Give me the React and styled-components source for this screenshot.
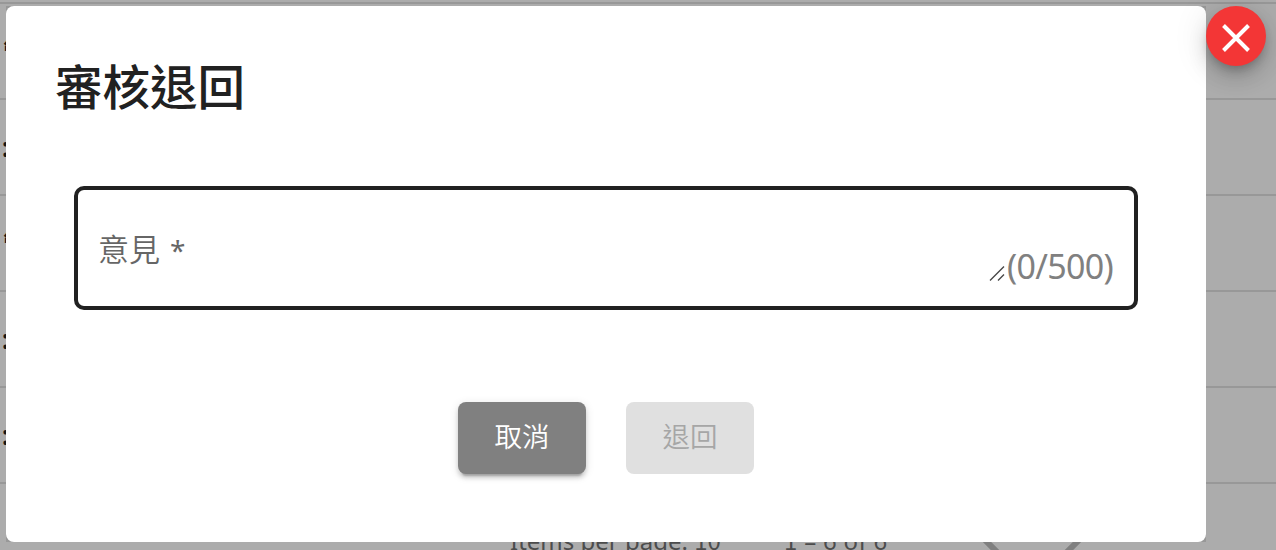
import React from "react";
import styled, { createGlobalStyle } from "styled-components";

const Global = createGlobalStyle`
  * { box-sizing: border-box; }
  body { margin: 0; overflow: hidden; font-family: "Noto Sans", "Noto Sans CJK TC", sans-serif; }
`;

const Page = styled.div`
  position: relative;
  width: 1276px;
  height: 550px;
  overflow: hidden;
  background: #acacac;
  padding-top: 2px;
`;

const Row = styled.div`
  height: 96px;
  border-top: 2px solid #989898;
  display: flex;
  align-items: center;
  color: #161616;
  font-size: 26px;
  line-height: 30px;
  font-weight: 700;
`;

const Cell = styled.span`
  padding-left: ${(p) => p.$indent}px;
`;

const Paginator = styled.div`
  border-top: 2px solid #989898;
  height: 120px;
  padding: 41px 0 0 510px;
  display: flex;
  align-items: flex-start;
  color: #4c4c4c;
  font-size: 24px;
  line-height: 32px;
  white-space: nowrap;
`;

const Digits = styled.span`
  font-family: "Noto Sans CJK TC", sans-serif;
  line-height: 1;
`;

const PageSize = styled.span`
  width: 274px;
`;

const Range = styled.span`
  width: 189px;
  letter-spacing: 0.3px;
`;

const Chevron = styled.svg`
  display: block;
`;

const Overlay = styled.div`
  position: absolute;
  inset: 0;
  padding: 6px;
  display: flex;
  align-items: flex-start;
`;

const Shell = styled.div`
  width: 1200px;
  height: 536px;
  background: #989898;
`;

const Dialog = styled.section`
  height: 100%;
  border-radius: 8px;
  background: #fff;
  padding: 44px 68px 0;
`;

const Title = styled.h2`
  margin: 0 0 0 -19px;
  height: 136px;
  font-family: "Noto Sans CJK TC", sans-serif;
  font-size: 47.5px;
  line-height: 70px;
  font-weight: 500;
  color: #212121;
`;

const Field = styled.div`
  height: 124px;
  border: 4px solid #212121;
  border-radius: 10px;
  padding: 0 21px 0 20px;
  display: flex;
  justify-content: space-between;
`;

const Label = styled.label`
  margin-top: 39px;
  font-size: 31px;
  line-height: 40px;
  color: #666;
  font-weight: 350;
`;

const Required = styled.span`
  font-size: 28px;
  margin-left: 2px;
  line-height: 1;
  font-weight: 400;
`;

const Counter = styled.div`
  display: flex;
  align-items: flex-start;
  margin-top: 54px;
  font-size: 34px;
  line-height: 44px;
  letter-spacing: -0.7px;
  color: #808080;
`;

const Grip = styled.svg`
  display: block;
  margin-top: 22px;
  margin-right: 2px;
`;

const Actions = styled.div`
  margin-top: 92px;
  display: flex;
  justify-content: center;
  gap: 40px;
`;

const Button = styled.button`
  width: 128px;
  height: 72px;
  padding: 0 0 6px;
  border: 0;
  border-radius: 8px;
  font-family: "Noto Sans CJK TC", sans-serif;
  font-size: 27.5px;
  line-height: 66px;
  font-weight: 350;
  color: ${(p) => (p.disabled ? "#a6a6a6" : "#fff")};
  background: ${(p) => (p.disabled ? "#e0e0e0" : "#808080")};
  box-shadow: ${(p) =>
    p.disabled
      ? "none"
      : "0 6px 2px -4px rgba(0,0,0,.2), 0 4px 4px rgba(0,0,0,.14), 0 2px 10px rgba(0,0,0,.12)"};
`;

const CloseButton = styled.button`
  width: 60px;
  height: 60px;
  padding: 4px 0 0;
  border: 0;
  border-radius: 50%;
  background: #f33636;
  display: flex;
  align-items: center;
  justify-content: center;
  box-shadow: 0 6px 10px -2px rgba(0,0,0,.2), 0 12px 20px rgba(0,0,0,.14), 0 2px 36px rgba(0,0,0,.12);
`;

const rows = [
  { text: "管", indent: 3 },
  { text: ":", indent: 2 },
  { text: "管", indent: 3 },
  { text: ":", indent: 2 },
  { text: ":", indent: 2 },
];

export default function App() {
  return (
    <Page>
      <Global />
      {rows.map((row, i) => (
        <Row key={i}>
          <Cell $indent={row.indent}>{row.text}</Cell>
        </Row>
      ))}
      <Paginator>
        <PageSize>Items per page: <Digits>10</Digits></PageSize>
        <Range><Digits>1</Digits> – 6 of 6</Range>
        <Chevron width="120" height="60" viewBox="0 0 120 60" fill="none" stroke="#808080" strokeWidth="6">
          <path d="M7 10L59 62L112 9" />
        </Chevron>
      </Paginator>
      <Overlay>
        <Shell>
          <Dialog>
            <Title>審核退回</Title>
            <Field>
              <Label>意見 <Required>*</Required></Label>
              <Counter>
                <Grip width="16" height="16" viewBox="0 0 16 16" stroke="#484848" strokeWidth="1.4">
                  <path d="M1 14.5L15 .5M9 14.5L15 8.5" />
                </Grip>
                (0/500)
              </Counter>
            </Field>
            <Actions>
              <Button>取消</Button>
              <Button disabled>退回</Button>
            </Actions>
          </Dialog>
        </Shell>
        <CloseButton aria-label="close">
          <svg width="28" height="28" viewBox="0 0 28 28" stroke="#fff" strokeWidth="4">
            <path d="M1.5 1.5L26.5 26.5M26.5 1.5L1.5 26.5" />
          </svg>
        </CloseButton>
      </Overlay>
    </Page>
  );
}
